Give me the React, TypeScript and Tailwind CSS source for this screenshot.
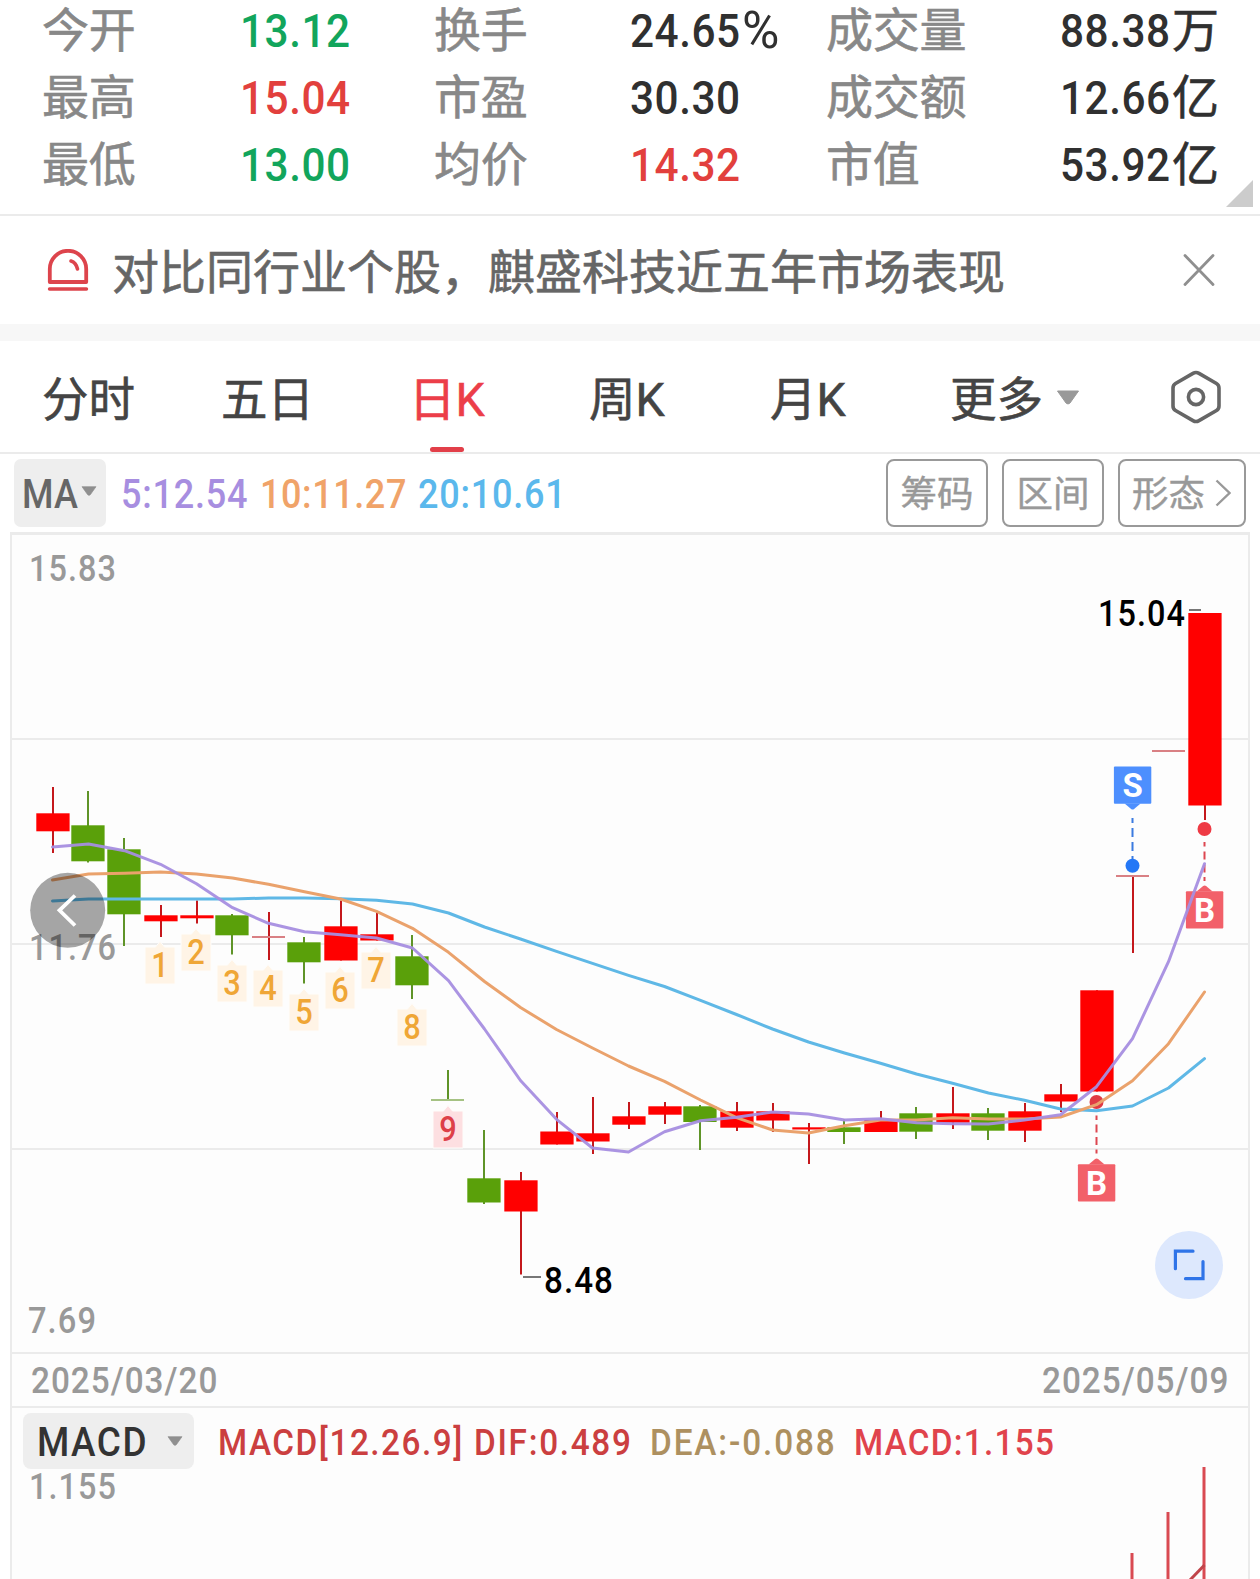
import React from 'react';

type Candle = {
  up: boolean;
  high: number;
  low: number;
  top: number;
  bottom: number;
};

const stats = [
  [
    { label: '今开', value: '13.12', unit: '', color: 'text-[#12a55c]' },
    { label: '换手', value: '24.65', unit: '%', color: 'text-[#303030]' },
    { label: '成交量', value: '88.38', unit: '万', color: 'text-[#303030]' },
  ],
  [
    { label: '最高', value: '15.04', unit: '', color: 'text-[#e2403d]' },
    { label: '市盈', value: '30.30', unit: '', color: 'text-[#303030]' },
    { label: '成交额', value: '12.66', unit: '亿', color: 'text-[#303030]' },
  ],
  [
    { label: '最低', value: '13.00', unit: '', color: 'text-[#12a55c]' },
    { label: '均价', value: '14.32', unit: '', color: 'text-[#e2403d]' },
    { label: '市值', value: '53.92', unit: '亿', color: 'text-[#303030]' },
  ],
];

const tabs = ['分时', '五日', '日K', '周K', '月K'];

// [up, high, low, body top, body bottom] in chart coordinates
const candles: Candle[] = (
  [
    [1, 787, 853, 813.3, 831.3],
    [0, 791, 862.5, 825.3, 861.3],
    [0, 838, 946, 849.3, 914.3],
    [1, 905, 937, 915.3, 921.3],
    [1, 900.5, 923.5, 915.3, 918.3],
    [0, 914, 954.5, 915.3, 935.3],
    [1, 912, 960, 937, 937],
    [0, 937, 983.5, 942.3, 962.3],
    [1, 900.5, 960.5, 926.3, 960.5],
    [1, 913, 940.5, 934.3, 940.5],
    [0, 935, 999, 956.3, 985.3],
    [0, 1070, 1100, 1100, 1100],
    [0, 1130, 1204, 1178.3, 1202.5],
    [1, 1172, 1274.5, 1180.3, 1211.5],
    [1, 1112, 1144.5, 1131.5, 1144.5],
    [1, 1097, 1154, 1133.3, 1141.5],
    [1, 1102, 1129, 1116.3, 1124.7],
    [1, 1102, 1124, 1106.3, 1114.7],
    [0, 1105, 1150, 1106.3, 1122],
    [1, 1102, 1131, 1111.3, 1127.7],
    [1, 1103, 1132, 1111.3, 1120.5],
    [1, 1123, 1164, 1127.3, 1129.5],
    [0, 1119, 1144, 1127.3, 1132],
    [1, 1111, 1132, 1120, 1132],
    [0, 1107, 1139, 1113.3, 1131.7],
    [1, 1087, 1129, 1113.3, 1122.7],
    [0, 1108, 1140, 1113.3, 1130.7],
    [1, 1103, 1142, 1111.3, 1130.7],
    [1, 1084, 1112, 1094.3, 1101.5],
    [1, 990.3, 1091.5, 990.3, 1091.5],
    [1, 875, 953, 876, 876],
    [1, 751, 751, 751, 751],
    [1, 613, 820, 613, 805.5],
  ] as number[][]
).map(([up, high, low, top, bottom]) => ({ up: up === 1, high, low, top, bottom }));

const ma5 = [
  847, 844, 850.7, 864.3, 883.7, 907.7, 923.3, 931.7, 934.7, 938, 948, 980.7, 1029, 1080.5, 1119.3, 1148, 1152,
  1131.7, 1120.7, 1117.3, 1112, 1114, 1120, 1118.7, 1122.7, 1123.7, 1124, 1120, 1114.7, 1086.7, 1038.7, 961.7, 863.7,
];
const ma10 = [
  880, 874, 873.3, 872, 874, 878, 884.3, 891.7, 899, 911.3, 928.3, 952.3, 981.5, 1007.5, 1029.5, 1048, 1066,
  1081.3, 1100, 1117.7, 1130, 1133, 1125.7, 1120, 1120, 1117.7, 1119, 1119, 1117, 1104.7, 1080.7, 1043.7, 992,
];
const ma20 = [
  901, 899, 899, 899, 899, 899, 898, 898, 898.7, 900.3, 904, 913, 927, 939, 951.3, 963.3, 975.3,
  986.5, 1000.3, 1014.5, 1029, 1042, 1053, 1063.3, 1074, 1083.3, 1093, 1100.3, 1109, 1110.7, 1106, 1088, 1058.7,
];

// Nine-turn sequence labels: y is the bottom edge of each tag
const turns = [
  { n: 1, y: 984 },
  { n: 2, y: 971 },
  { n: 3, y: 1002 },
  { n: 4, y: 1007 },
  { n: 5, y: 1031 },
  { n: 6, y: 1009 },
  { n: 7, y: 989 },
  { n: 8, y: 1046 },
  { n: 9, y: 1148 },
];

const xAt = (i: number) => 53 + 36 * i;
const toPoints = (values: number[]) => values.map((y, i) => `${xAt(i) - 0.5},${y}`).join(' ');

// Narrow numerals used across the quote page
const Narrow = ({ children, className = '' }: { children: React.ReactNode; className?: string }) => (
  <span className={`inline-block origin-left scale-x-90 font-medium ${className}`}>{children}</span>
);

const CaretDown = ({ className = '' }: { className?: string }) => (
  <svg viewBox="0 0 24 15" className={className} aria-hidden="true">
    <path d="M1.5 1h21L14 13q-2 2-4 0z" fill="currentColor" stroke="currentColor" strokeLinejoin="round" />
  </svg>
);

const StatsPanel = () => (
  <section className="relative h-[216px] border-b-2 border-[#ebebeb]">
    <div className="grid grid-rows-[64px_67px_67px]">
      {stats.map((row, i) => (
        <div
          key={i}
          className="grid grid-cols-[198px_194px_196px_196px_1fr_auto] content-end items-end pl-[42px] pr-[41px] text-[47px] leading-[66px]"
        >
          {row.map((item, j) => (
            <React.Fragment key={item.label}>
              <span className="text-[#888] tracking-[-0.3px] [-webkit-text-stroke:0.6px]">{item.label}</span>
              <span className={`flex ${item.color} ${j === 2 ? 'justify-end' : ''}`}>
                <Narrow className="-mr-[11px] tracking-[0.6px]">{item.value}</Narrow>
                <span className={item.unit === '%' ? 'text-[51px]' : '[-webkit-text-stroke:0.6px]'}>
                  {item.unit}
                </span>
              </span>
            </React.Fragment>
          ))}
        </div>
      ))}
    </div>
    <svg viewBox="0 0 27 27" className="absolute right-[7px] bottom-[7px] w-[27px] h-[27px]" aria-hidden="true">
      <path d="M27 0V27H0z" fill="#ccc" />
    </svg>
  </section>
);

const NoticeBar = () => (
  <section className="flex h-[125px] items-center border-b-[17px] border-[#f7f7f7] pl-[47px] pr-[45px]">
    <svg viewBox="0 0 42 42" className="h-[42px] w-[42px]" fill="none" stroke="#dd444c" strokeWidth="3.8" aria-hidden="true">
      <path d="M2.8 33V20a18.2 18.2 0 0 1 36.4 0V33z" strokeLinejoin="round" />
      <path d="M24 12q5 1.5 6.5 8" strokeWidth="3.6" strokeLinecap="round" />
      <path d="M2.5 40H39.5" strokeWidth="3.4" strokeLinecap="round" />
    </svg>
    <p className="mt-[6px] ml-[23px] flex-1 whitespace-nowrap text-[47px] leading-[60px] text-[#666] [-webkit-text-stroke:0.6px]">
      对比同行业个股，麒盛科技近五年市场表现
    </p>
    <button aria-label="关闭">
      <svg viewBox="0 0 32 32" className="h-8 w-8" stroke="#8f8f8f" strokeWidth="2.8" strokeLinecap="round" aria-hidden="true">
        <path d="M2 1.5L30 30.5M30 1.5L2 30.5" />
      </svg>
    </button>
  </section>
);

const PeriodTabs = () => (
  <nav className="grid h-[113px] grid-cols-[179px_188px_180px_181px_180px_1fr_auto] items-center border-b-2 border-[#ebebeb] pl-[42px] pr-[39px] text-[46.5px] leading-[60px] text-[#444]">
    {tabs.map((tab) => (
      <button
        key={tab}
        className={`relative h-full justify-self-start pt-[6px] text-left whitespace-nowrap [-webkit-text-stroke:0.6px] ${tab === '日K' ? 'text-[#ec3e49]' : ''}`}
      >
        {tab}
        {tab === '日K' && (
          <span className="absolute bottom-0 left-[21px] h-[5px] w-[34px] rounded-full bg-[#e23f49]" />
        )}
      </button>
    ))}
    <button className="flex items-center gap-[13px] pt-[6px] text-left [-webkit-text-stroke:0.6px]">
      更多
      <CaretDown className="-mt-1 w-6 h-[15px] text-[#999]" />
    </button>
    <button aria-label="设置">
      <svg viewBox="0 0 50 54" className="h-[54px] w-[50px]" fill="none" stroke="#666" strokeWidth="3.6" aria-hidden="true">
        <path d="M22 3.4Q25 1.6 28 3.4L45.5 13.5Q48 15 48 18V36Q48 39 45.5 40.5L28 50.6Q25 52.4 22 50.6L4.5 40.5Q2 39 2 36V18Q2 15 4.5 13.5Z" />
        <circle cx="25" cy="27" r="7.6" />
      </svg>
    </button>
  </nav>
);

const MaBar = () => (
  <div className="flex h-[78px] items-start pl-[14px] pr-[14px] pt-[5px] text-[40px] leading-[72px]">
    <button className="flex h-[68px] w-[92px] items-center rounded-[7px] bg-[#eee] pl-[8px] text-[#666]">
      <Narrow className="-mr-[6px] pt-1 tracking-[0.3px]">MA</Narrow>
      <CaretDown className="ml-[3px] -mt-1 h-[10px] w-4 text-[#8f8f8f]" />
    </button>
    <div className="flex flex-1 pl-[15px] tracking-[0.85px] whitespace-nowrap">
      <Narrow className="w-[139px] text-[#a78ee0]">5:12.54</Narrow>
      <Narrow className="w-[158px] tracking-[0.65px] text-[#f0a369]">10:11.27</Narrow>
      <Narrow className="text-[#5bb8ec]">20:10.61</Narrow>
    </div>
    <div className="flex gap-[14px] text-[36.5px] leading-[60px] text-[#999] [-webkit-text-stroke:0.4px]">
      <button className="h-[68px] w-[102px] rounded-lg border-2 border-[#999] pt-[4px]">筹码</button>
      <button className="h-[68px] w-[102px] rounded-lg border-2 border-[#999] pt-[4px]">区间</button>
      <button className="flex h-[68px] w-[128px] items-center rounded-lg border-2 border-[#999] pl-[12px]">
        <span className="pt-[4px]">形态</span>
        <svg viewBox="0 0 16 28" className="ml-[10px] h-7 w-4" fill="none" stroke="#999" strokeWidth="2.4" aria-hidden="true">
          <path d="M1.5 1.5L14.5 14L1.5 26.5" />
        </svg>
      </button>
    </div>
  </div>
);

const CandleShape = ({ candle, index }: { candle: Candle; index: number }) => {
  const x = xAt(index) - (candle.up ? 0 : 1);
  const flat = candle.top === candle.bottom;
  return (
    <g>
      {candle.high < candle.low && (
        <path d={`M${x} ${candle.high}V${candle.low}`} stroke={candle.up ? '#c4181c' : '#5f9428'} strokeWidth="2" />
      )}
      {flat ? (
        <path d={`M${x - 17} ${candle.top}h33`} stroke={candle.up ? '#d98084' : '#a5c283'} strokeWidth="2" />
      ) : (
        <rect
          x={x - 16.7}
          y={candle.top}
          width="33.3"
          height={candle.bottom - candle.top}
          fill={candle.up ? '#ff0000' : '#5aa00a'}
        />
      )}
    </g>
  );
};

// Buy/sell flag; tip points up unless down is set
const TradeFlag = ({ x, y, text, fill, down }: { x: number; y: number; text: string; fill: string; down?: boolean }) => (
  <g>
    <rect x={x - 18.7} y={y} width="37.4" height="37.2" rx="1" fill={fill} />
    <path
      d={down ? `M${x - 8} ${y + 37}h16l-6.5 5.5q-1.5 1-3 0z` : `M${x - 8} ${y + 0.2}h16l-6.5-5.5q-1.5-1-3 0z`}
      fill={fill}
    />
    <text x={x} y={y + 30.4} textAnchor="middle" fontSize="33" fontWeight="700" fill="#fff">
      {text}
    </text>
  </g>
);

// Price text squeezed to a fixed width
const PriceText = ({ x, y, width, children }: { x: number; y: number; width: number; children: string }) => (
  <text x={x} y={y} textLength={width} lengthAdjust="spacingAndGlyphs" letterSpacing="1.2" fontSize="37" fontWeight="500">
    {children}
  </text>
);

const KLineChart = () => (
  <svg viewBox="0 532 1260 822" className="block h-[822px] w-[1260px]" aria-label="日K线图">
    <rect x="11" y="533.5" width="1238" height="819.5" fill="#fdfdfd" />
    <g stroke="#ebebeb" strokeWidth="2">
      <path d="M10 533.5H1250" strokeWidth="3" />
      <path d="M11 532V1354M1249 532V1354" />
      <path d="M12 739H1248M12 944H1248M12 1149H1248M10 1353H1250" />
    </g>

    <g fill="#999">
      <PriceText x={29} y={581} width={88}>15.83</PriceText>
      <PriceText x={29} y={960} width={88}>11.76</PriceText>
      <PriceText x={28} y={1333} width={69}>7.69</PriceText>
    </g>

    {/* nine-turn tags */}
    {turns.map(({ n, y }) => {
      const x = xAt(n + 2) - 1;
      return (
        <g key={n}>
          <path
            d={`M${x - 15} ${y - 37}h10.5l4.5-5.5l4.5 5.5h10.5v37h-30z`}
            fill={n === 9 ? '#fddfe1' : '#fff4e6'}
            stroke="#fefdfb"
            strokeWidth="1"
          />
          <text
            x={x}
            y={y - 7.5}
            textAnchor="middle"
            textLength="17.5"
            lengthAdjust="spacingAndGlyphs"
            fontSize="35"
            fontWeight="500"
            fill={n === 9 ? '#dd4048' : '#efa636'}
          >
            {n}
          </text>
        </g>
      );
    })}

    {candles.map((candle, i) => (
      <CandleShape key={i} candle={candle} index={i} />
    ))}

    {/* trade points */}
    <g strokeWidth="2">
      <path d="M1132.5 818V859" stroke="#3b7be0" strokeDasharray="5 5 9 5 9 5 9" />
      <circle cx="1132.5" cy="865.7" r="7" fill="#2477f6" />
      <TradeFlag x={1132.6} y={766.6} text="S" fill="#4d8ffe" down />
      <path d="M1204.5 842V881" stroke="#dd4650" strokeDasharray="4.5 5 8 5 8 4.5 4.5" />
      <circle cx="1204.5" cy="829" r="7" fill="#ee3a44" />
      <TradeFlag x={1204.6} y={891.3} text="B" fill="#f26069" />
      <path d="M1096.5 1115.5V1153.5" stroke="#dd4650" strokeDasharray="4.5 4.5 8 4.5 8 4.5 4.5" />
      <circle cx="1096.5" cy="1102" r="7" fill="#e03a44" />
      <TradeFlag x={1096.6} y={1164.3} text="B" fill="#f26069" />
    </g>

    {/* moving averages */}
    <g fill="none" strokeWidth="3" strokeLinejoin="round" strokeLinecap="round">
      <polyline points={toPoints(ma20)} stroke="#5fb8e6" />
      <polyline points={toPoints(ma10)} stroke="#eaa26c" />
      <polyline points={toPoints(ma5)} stroke="#a78ee0" strokeOpacity="0.95" />
    </g>

    {/* extremes */}
    <path d="M1189 610H1201M523 1277H541" stroke="#777" strokeWidth="2" />
    <PriceText x={1098} y={626} width={88}>15.04</PriceText>
    <PriceText x={544} y={1293} width={70}>8.48</PriceText>

    {/* scroll back */}
    <circle cx="67.7" cy="910.3" r="37.5" fill="#000" fillOpacity="0.35" />
    <path d="M75 895.5L59.5 910.3L75 925.5" fill="none" stroke="#fff" strokeWidth="3.8" />

    {/* full screen */}
    <circle cx="1189" cy="1265" r="34" fill="#dde8fd" />
    <path
      d="M1193 1251.2H1175.4V1268.7M1185.5 1278.7H1203V1261.5"
      fill="none"
      stroke="#2f74e8"
      strokeWidth="3.2"
      strokeLinecap="round"
    />
  </svg>
);

const MacdPanel = () => (
  <section className="mx-[10px] h-[171px] border-x-2 border-[#ebebeb] bg-[#fdfdfd]">
    <div className="flex h-[58px] items-start whitespace-nowrap pl-[11px] pt-[5px] text-[37px] leading-[59px]">
      <button className="flex h-[56px] w-[171px] items-center rounded-lg bg-[#eee] pl-[14px] text-[41px] text-[#333]">
        <Narrow className="w-[130px] pt-0.5 text-left tracking-[1.7px]">MACD</Narrow>
        <CaretDown className="h-[10px] w-4 text-[#8f8f8f]" />
      </button>
      <Narrow className="ml-[24px] w-[256px] tracking-[1.7px] text-[#cb3f40]">MACD[12.26.9]</Narrow>
      <Narrow className="w-[176px] tracking-[1.9px] text-[#cb3f40]">DIF:0.489</Narrow>
      <Narrow className="w-[204px] tracking-[2.1px] text-[#ad9060]">DEA:-0.088</Narrow>
      <Narrow className="tracking-[1.4px] text-[#e0434c]">MACD:1.155</Narrow>
    </div>
    <svg viewBox="12 1466 1236 113" className="block h-[113px] w-[1236px]" aria-label="MACD">
      <g fill="#999">
        <PriceText x={29} y={1499} width={88}>1.155</PriceText>
      </g>
      <path d="M1132 1553V1579M1168 1512V1579M1204 1467V1579" stroke="#d94a52" strokeWidth="3" />
      <path d="M1204.5 1565L1190 1580" stroke="#c0454a" strokeWidth="3" />
    </svg>
  </section>
);

const App = () => (
  <main className="flex h-[1579px] w-[1260px] flex-col overflow-hidden bg-white font-['Roboto','Noto_Sans_CJK_SC',sans-serif]">
    <StatsPanel />
    <NoticeBar />
    <PeriodTabs />
    <MaBar />
    <KLineChart />
    <div className="mx-[10px] flex h-[54px] items-center justify-between border-x-2 border-b-2 border-[#ebebeb] bg-[#fdfdfd] pl-[19px] pt-[2px] text-[37px] tracking-[1.1px] text-[#999]">
      <Narrow>2025/03/20</Narrow>
      <Narrow className="-mr-[2px]">2025/05/09</Narrow>
    </div>
    <MacdPanel />
  </main>
);

export default App;
